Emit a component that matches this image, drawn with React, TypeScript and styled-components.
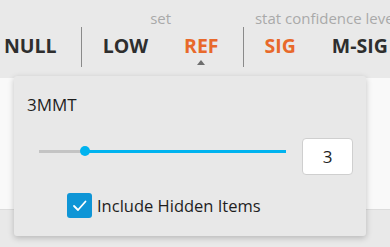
import { createGlobalStyle } from 'styled-components';
import styled from 'styled-components';

const GlobalStyle = createGlobalStyle`
  html, body {
    margin: 0;
    padding: 0;
    background: #e9e9e9;
    font-family: "Open Sans", "Noto Sans", sans-serif;
    overflow: hidden;
  }
`;

type Item = { label: string; active?: boolean; orange?: boolean };

const groups: { title?: string; items: Item[] }[] = [
  { items: [{ label: 'NULL' }] },
  { title: 'set', items: [{ label: 'LOW' }, { label: 'REF', active: true, orange: true }] },
  { title: 'stat confidence level', items: [{ label: 'SIG', orange: true }, { label: 'M-SIG' }] },
];

function App() {
  const value = 3;
  const min = 0;
  const max = 16;
  const pct = ((value - min) / (max - min)) * 100;

  return (
    <>
      <GlobalStyle />
      <Page>
        <Toolbar>
          {groups.map((g, gi) => (
            <GroupWrap key={gi}>
              {gi > 0 && <Separator />}
              <Group>
                <GroupTitle>{g.title ?? ''}</GroupTitle>
                <Items>
                  {g.items.map((it) => (
                    <ToolButton key={it.label} $orange={it.orange}>
                      {it.label}
                      {it.active && <Caret />}
                    </ToolButton>
                  ))}
                </Items>
              </Group>
            </GroupWrap>
          ))}
        </Toolbar>
        <Content />
        <Popover>
          <FieldLabel>3MMT</FieldLabel>
          <SliderRow>
            <Slider>
              <TrackLeft style={{ width: `${pct}%` }} />
              <Thumb />
              <TrackRight />
            </Slider>
            <NumberBox>{value}</NumberBox>
          </SliderRow>
          <CheckRow>
            <CheckBox>
              <svg width="17" height="17" viewBox="0 0 17 17" fill="none">
                <polyline
                  points="3,9 7,13 14.5,4.5"
                  stroke="#fff"
                  strokeWidth="1.8"
                  strokeLinecap="round"
                  strokeLinejoin="round"
                />
              </svg>
            </CheckBox>
            <CheckLabel>Include Hidden Items</CheckLabel>
          </CheckRow>
        </Popover>
      </Page>
    </>
  );
}

export default App;

const Page = styled.div`
  position: relative;
  width: 390px;
  height: 247px;
  overflow: hidden;
`;

const Toolbar = styled.div`
  height: 78px;
  display: flex;
  align-items: stretch;
  margin-left: -14px;
  white-space: nowrap;
`;

const GroupWrap = styled.div`
  display: flex;
  align-items: stretch;
`;

const Separator = styled.div`
  width: 1px;
  background: #8a8a8a;
  margin: 27px 3px 11px 6px;
`;

const Group = styled.div`
  display: flex;
  flex-direction: column;
  align-items: center;
`;

const GroupTitle = styled.div`
  height: 22px;
  margin-top: 7px;
  font-size: 15px;
  line-height: 22px;
  color: #a9a9a9;
`;

const Items = styled.div`
  display: flex;
`;

const ToolButton = styled.div<{ $orange?: boolean }>`
  position: relative;
  padding: 0 18px;
  font-size: 19.5px;
  font-weight: 700;
  line-height: 34px;
  color: ${({ $orange }) => ($orange ? '#e8692b' : '#2e2e2e')};
`;

const Caret = styled.span`
  position: absolute;
  left: 50%;
  bottom: -2px;
  transform: translateX(-50%);
  width: 0;
  height: 0;
  border-left: 4px solid transparent;
  border-right: 4px solid transparent;
  border-bottom: 5px solid #6e6e6e;
`;

const Content = styled.div`
  height: 131px;
  background: #f9f9f9;
  border-bottom: 1px solid #dcdcdc;
`;

const Popover = styled.div`
  position: absolute;
  left: 14px;
  top: 76px;
  width: 352px;
  height: 160px;
  box-sizing: border-box;
  padding: 17px 13px 18px;
  background: #e8e8e8;
  border-radius: 3px;
  box-shadow: 0 2px 6px rgba(0, 0, 0, 0.22);
  display: flex;
  flex-direction: column;
`;

const FieldLabel = styled.div`
  font-size: 17px;
  line-height: 23px;
  color: #1e1e1e;
`;

const SliderRow = styled.div`
  display: flex;
  align-items: flex-start;
  margin-top: 22px;
`;

const Slider = styled.div`
  width: 247px;
  height: 26px;
  margin-left: 12px;
  margin-right: 16px;
  display: flex;
  align-items: center;
`;

const TrackLeft = styled.div`
  height: 3px;
  background: #c4c4c4;
`;

const Thumb = styled.div`
  flex: none;
  width: 10px;
  height: 10px;
  border-radius: 50%;
  background: #00b3ef;
  margin: 0 -5px;
  position: relative;
  z-index: 1;
`;

const TrackRight = styled.div`
  flex: 1;
  height: 3px;
  background: #00b3ef;
`;

const NumberBox = styled.div`
  width: 51px;
  height: 37px;
  box-sizing: border-box;
  background: #fff;
  border: 1px solid #cfcfcf;
  border-radius: 4px;
  display: flex;
  align-items: center;
  justify-content: center;
  font-size: 17px;
  color: #1e1e1e;
`;

const CheckRow = styled.div`
  display: flex;
  align-items: center;
  gap: 5px;
  margin-top: 18px;
  margin-left: 40px;
`;

const CheckBox = styled.div`
  width: 25px;
  height: 25px;
  border-radius: 3px;
  background: #0e95d6;
  display: flex;
  align-items: center;
  justify-content: center;
`;

const CheckLabel = styled.div`
  font-size: 16.5px;
  line-height: 23px;
  color: #1e1e1e;
`;
